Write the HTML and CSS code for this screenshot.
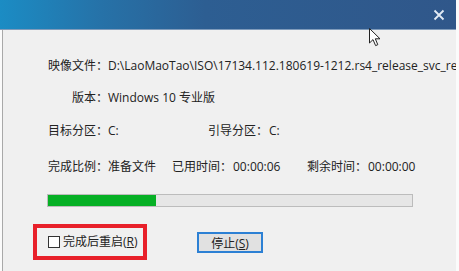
FILE: index.html
```html
<!DOCTYPE html>
<html lang="zh-CN">
<head>
<meta charset="utf-8">
<link rel="stylesheet" href="styles.css">
</head>
<body>
<div class="window">
  <div class="titlebar">
    <svg class="close" width="12" height="12" viewBox="0 0 12 12"><path d="M1.5 1.5 L10.5 10.5 M10.5 1.5 L1.5 10.5" stroke="#e3ebf4" stroke-width="1.8" fill="none"/></svg>
  </div>
  <div class="content">
    <div class="row r1">
      <span class="label">映像文件：</span>
      <span class="value nowrap">D:\LaoMaoTao\ISO\17134.112.180619-1212.rs4_release_svc_refresh_CLIENTCONSUMER_RET_x64FRE_zh-cn.iso</span>
    </div>
    <div class="row r2">
      <span class="label">版本：</span>
      <span class="value">Windows 10 专业版</span>
    </div>
    <div class="row r3">
      <span class="label">目标分区：</span>
      <span class="value w100">C:</span>
      <span class="label2">引导分区：</span>
      <span class="value">C:</span>
    </div>
    <div class="row r4">
      <span class="label">完成比例：</span>
      <span class="value w64">准备文件</span>
      <span class="label2">已用时间：</span>
      <span class="value w74">00:00:06</span>
      <span class="label2">剩余时间：</span>
      <span class="value">00:00:00</span>
    </div>
    <div class="progress"><div class="fill" style="width:29.6%"></div></div>
    <div class="bottom">
      <div class="highlight">
        <span class="check"></span>
        <span class="chk-text">完成后重启(<u>R</u>)</span>
      </div>
      <button class="btn">停止(<u>S</u>)</button>
    </div>
  </div>
  <svg class="cursor" width="12" height="19" viewBox="0 0 12 19"><path d="M0.5 0.5 L0.5 15 L4 11.6 L6.6 17.6 L8.8 16.7 L6.3 10.8 L11 10.8 Z" fill="#fff" stroke="#222" stroke-width="1"/></svg>
</div>
</body>
</html>
```
FILE: styles.css
```css
html, body {
  margin: 0;
  padding: 0;
  background: #fbfbfb;
}
body {
  width: 459px;
  height: 271px;
  overflow: hidden;
  font-family: "Open Sans", "Noto Sans CJK SC", sans-serif;
  font-size: 12px;
  color: #222;
}
.window {
  position: relative;
  width: 456px;
  height: 271px;
}
.titlebar {
  height: 29px;
  background: linear-gradient(90deg, #1b8cc4 0%, #2672a8 22%, #2d5e92 45%, #30578a 100%);
  border-bottom: 1px solid #7f9bbb;
  display: flex;
  justify-content: flex-end;
  align-items: center;
  padding-right: 11px;
}
.close { display: block; }
.content {
  margin-left: 2px;
  border-left: 1px solid #a9a9a9;
  background: #f0f0f0;
  height: 241px;
  padding-top: 28px;
  box-sizing: border-box;
  padding-left: 44px;
  overflow: hidden;
}
.row {
  display: flex;
  align-items: center;
  height: 16px;
  line-height: 16px;
  white-space: nowrap;
}
.r2 { margin-top: 16px; }
.r3 { margin-top: 17px; }
.r4 { margin-top: 20px; }
.label {
  width: 61px;
  flex: none;
  text-align: right;
}
.label2 { flex: none; width: 61px; }
.value { flex: none; }
.nowrap { white-space: nowrap; }
.w100 { width: 100px; }
.w64 { width: 64px; }
.w74 { width: 74px; }
.progress {
  margin-top: 19px;
  width: 366px;
  height: 13px;
  box-sizing: border-box;
  border: 1px solid #bcbcbc;
  background: #e6e6e6;
}
.fill {
  height: 100%;
  background: #06b025;
}
.bottom {
  margin-top: 17px;
  margin-left: -14px;
  display: flex;
  align-items: center;
}
.highlight {
  width: 114px;
  height: 36px;
  box-sizing: border-box;
  border: 4px solid #e8202a;
  display: flex;
  align-items: center;
  padding-left: 11px;
  gap: 3px;
}
.check {
  width: 10px;
  height: 10px;
  border: 1px solid #333;
  background: #fff;
  flex: none;
}
.chk-text { line-height: 16px; }
.btn {
  margin-left: 50px;
  width: 66px;
  height: 21px;
  box-sizing: border-box;
  border: 2px solid #2c80d4;
  background: #e1e1e1;
  font: inherit;
  color: #222;
  padding: 0;
}
.cursor {
  position: absolute;
  left: 369px;
  top: 28px;
}
```
